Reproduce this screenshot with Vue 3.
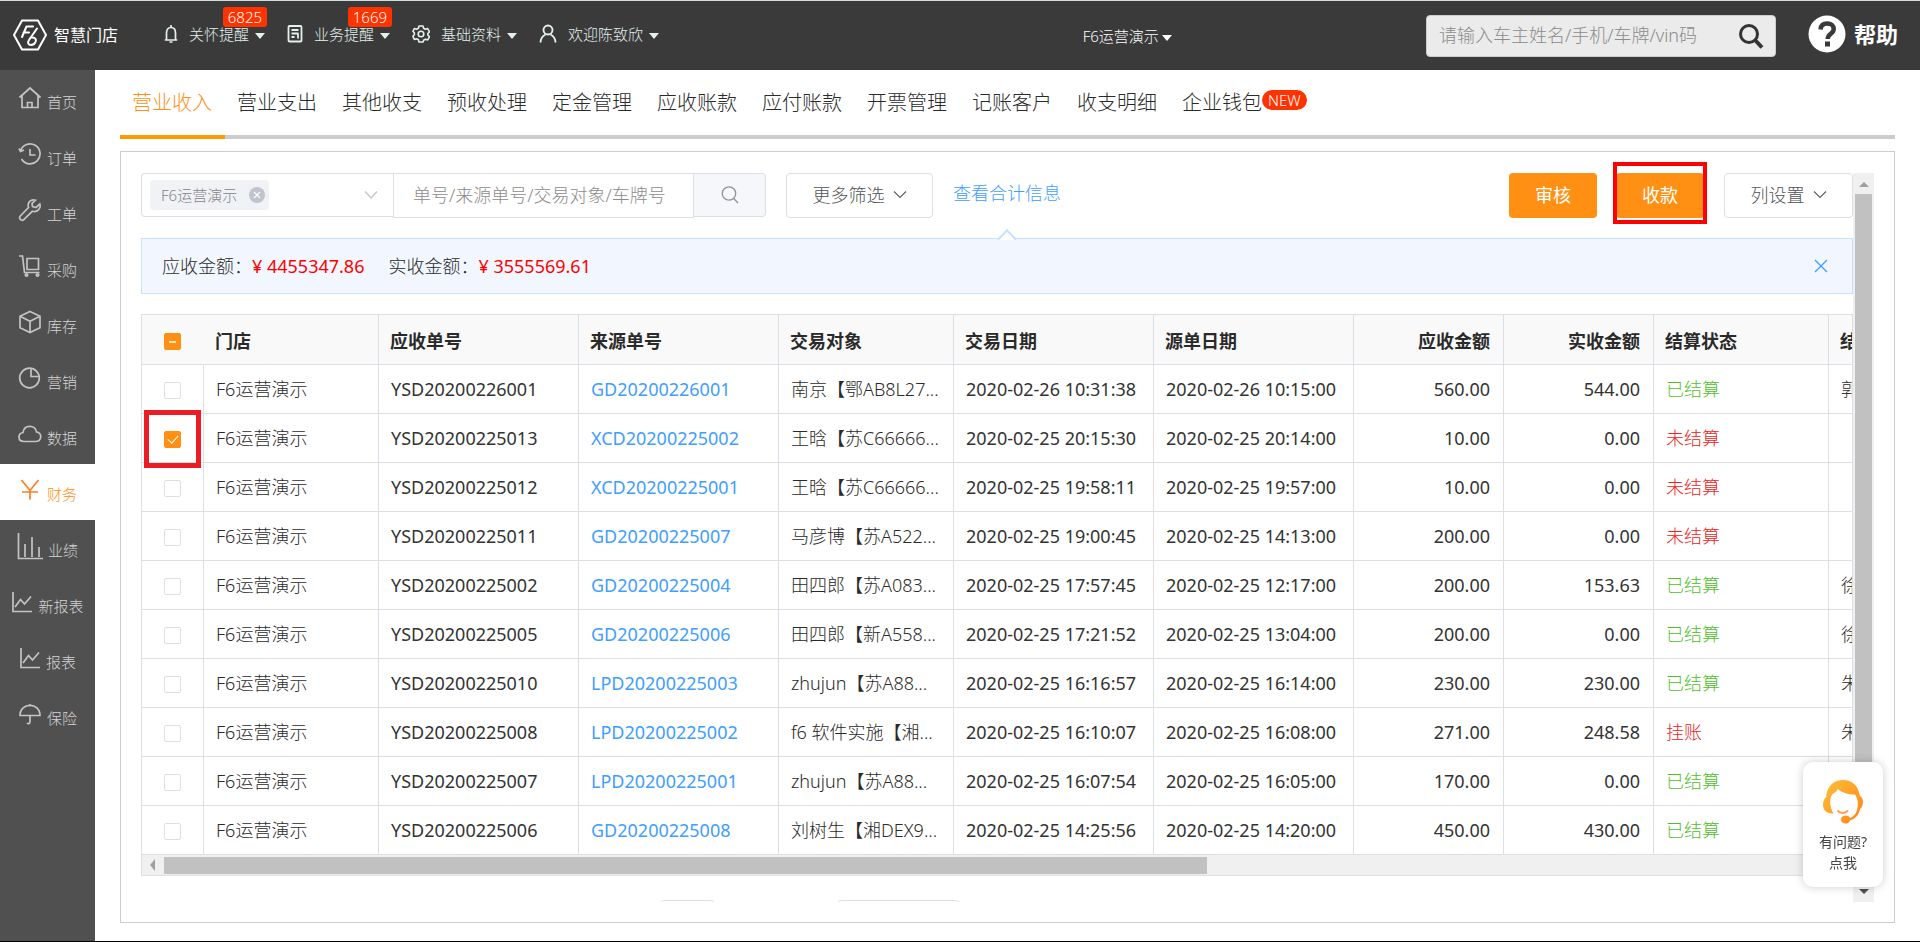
<script setup>
import { ref } from 'vue'

const menus = [
  { icon: 'bell', label: '关怀提醒', badge: '6825' },
  { icon: 'doc', label: '业务提醒', badge: '1669' },
  { icon: 'gear', label: '基础资料' },
  { icon: 'user', label: '欢迎陈致欣' },
]

const sideItems = [
  { icon: 'home', label: '首页' },
  { icon: 'history', label: '订单' },
  { icon: 'wrench', label: '工单' },
  { icon: 'cart', label: '采购' },
  { icon: 'box', label: '库存' },
  { icon: 'pie', label: '营销' },
  { icon: 'cloud', label: '数据' },
  { icon: 'yen', label: '财务', active: true },
  { icon: 'bars', label: '业绩' },
  { icon: 'line', label: '新报表' },
  { icon: 'line', label: '报表' },
  { icon: 'umbrella', label: '保险' },
]

const tabs = ['营业收入', '营业支出', '其他收支', '预收处理', '定金管理', '应收账款', '应付账款', '开票管理', '记账客户', '收支明细', '企业钱包']

const rows = ref([
  ['YSD20200226001', 'GD20200226001', '南京【鄂AB8L27...', '2020-02-26 10:31:38', '2020-02-26 10:15:00', '560.00', '544.00', '已结算', '郭'],
  ['YSD20200225013', 'XCD20200225002', '王晗【苏C66666...', '2020-02-25 20:15:30', '2020-02-25 20:14:00', '10.00', '0.00', '未结算', ''],
  ['YSD20200225012', 'XCD20200225001', '王晗【苏C66666...', '2020-02-25 19:58:11', '2020-02-25 19:57:00', '10.00', '0.00', '未结算', ''],
  ['YSD20200225011', 'GD20200225007', '马彦博【苏A522...', '2020-02-25 19:00:45', '2020-02-25 14:13:00', '200.00', '0.00', '未结算', ''],
  ['YSD20200225002', 'GD20200225004', '田四郎【苏A083...', '2020-02-25 17:57:45', '2020-02-25 12:17:00', '200.00', '153.63', '已结算', '徐'],
  ['YSD20200225005', 'GD20200225006', '田四郎【新A558...', '2020-02-25 17:21:52', '2020-02-25 13:04:00', '200.00', '0.00', '已结算', '徐'],
  ['YSD20200225010', 'LPD20200225003', 'zhujun【苏A88...', '2020-02-25 16:16:57', '2020-02-25 16:14:00', '230.00', '230.00', '已结算', '朱'],
  ['YSD20200225008', 'LPD20200225002', 'f6 软件实施【湘...', '2020-02-25 16:10:07', '2020-02-25 16:08:00', '271.00', '248.58', '挂账', '朱'],
  ['YSD20200225007', 'LPD20200225001', 'zhujun【苏A88...', '2020-02-25 16:07:54', '2020-02-25 16:05:00', '170.00', '0.00', '已结算', ''],
  ['YSD20200225006', 'GD20200225008', '刘树生【湘DEX9...', '2020-02-25 14:25:56', '2020-02-25 14:20:00', '450.00', '430.00', '已结算', ''],
].map(([no, source, party, traded, ordered, due, paid, status, settler], i) => (
  { no, source, party, traded, ordered, due, paid, status, settler, checked: i === 1 }
)))
</script>

<template>
  <div class="app">
    <header class="topbar">
      <a class="logo" href="#">
        <svg width="36" height="32" viewBox="0 0 36 32" fill="none" stroke="#fff" stroke-width="2" stroke-linejoin="round" stroke-linecap="round">
          <path d="M10 1.5h16L34 16l-8 14.500h-16L2 16z" />
          <path d="M10 18l4.500-10.500h6.500M11.500 13.500h5.500" />
          <path d="M25 9.500l-8 11.500c-2 3-.5 5 2 5 2.500 0 4-1.500 4.700-3.500.7-2.300-.7-4-3.200-4h-2" />
        </svg>
        <span>智慧门店</span>
      </a>
      <nav class="menus">
        <button v-for="m in menus" :key="m.label" class="menu" type="button">
          <svg v-if="m.icon === 'bell'" width="14" height="20" viewBox="0 0 14 20" fill="none" stroke="currentColor" stroke-width="1.700">
            <path d="M7 1v2M2.500 16V9C2.500 5.500 4 3.500 7 3.500S11.500 5.500 11.500 9v7M.8 16h12.400M5.500 18h3" />
          </svg>
          <svg v-else-if="m.icon === 'doc'" width="16" height="20" viewBox="0 0 16 20" fill="none" stroke="currentColor" stroke-width="1.800">
            <rect x="1.500" y="2" width="13" height="15.500" rx="1" /><path d="M4.500 6h7M4.500 9.500h7M4.500 13h3M11 9.500v5" />
          </svg>
          <svg v-else-if="m.icon === 'gear'" width="18" height="20" viewBox="0 0 18 20" fill="none" stroke="currentColor" stroke-width="1.600" stroke-linejoin="round">
            <path d="M7 2h4l.6 2.300 1.800 1 2.300-.7 1.800 3.200-1.700 1.700v1.500l1.700 1.700-1.800 3.200-2.300-.7-1.800 1L11 18H7l-.6-2.300-1.800-1-2.300.7L.9 12.200l1.500-1.700V9L.9 7.300 2.300 4.600l2.300.7 1.800-1z" /><circle cx="9" cy="10" r="2.800" />
          </svg>
          <svg v-else width="18" height="20" viewBox="0 0 18 20" fill="none" stroke="currentColor" stroke-width="1.900">
            <circle cx="9" cy="6" r="4.500" /><path d="M1.500 18.500c.2-4 2-6.500 5-8M16.500 18.500c-.2-4-2-6.500-5-8" />
          </svg>
          <span>{{ m.label }}</span>
          <i class="caret"></i>
          <b v-if="m.badge" class="badge">{{ m.badge }}</b>
        </button>
      </nav>
      <div class="space-left"></div>
      <button class="store" type="button"><span>F6运营演示</span><i class="caret"></i></button>
      <div class="space-right"></div>
      <form class="search" @submit.prevent>
        <input type="text" aria-label="搜索车主" placeholder="请输入车主姓名/手机/车牌/vin码">
        <button type="submit" aria-label="搜索">
          <svg width="26" height="26" viewBox="0 0 26 26" fill="none" stroke="#333" stroke-width="3"><circle cx="11" cy="11" r="8.500" /><path d="M17 17l7 7.500" stroke-width="4" /></svg>
        </button>
      </form>
      <a class="help" href="#">
        <svg width="38" height="38" viewBox="0 0 38 38"><circle cx="19" cy="19" r="18.500" fill="#fff" /><path d="M12.500 14.500c.3-4 3-6 6.700-6 4 0 6.500 2.300 6.500 5.500 0 5-6 4.500-6 10" fill="none" stroke="#3a3a3a" stroke-width="4.500" /><rect x="17" y="26.500" width="5" height="5" fill="#3a3a3a" /></svg>
        <span>帮助</span>
      </a>
    </header>

    <div class="body">
      <nav class="side">
        <a v-for="s in sideItems" :key="s.label" href="#" class="side-item" :class="{ active: s.active }">
          <svg v-if="s.icon === 'home'" width="24" height="24" viewBox="0 0 24 24"><path d="M1.500 11.500L12 2l10.500 9.500M4 9.500V21.500h16V9.500M9.500 21.500v-5h4.500v5" /></svg>
          <svg v-else-if="s.icon === 'history'" width="24" height="24" viewBox="0 0 24 24"><path d="M2.500 9A10 10 0 1 1 3.500 17M12 7v6h5.500M1 6.500l1.500 3 3.500-1.500" /></svg>
          <svg v-else-if="s.icon === 'wrench'" width="24" height="24" viewBox="0 0 24 24"><path d="M17.500 2.200C13 .8 9 4.500 10.500 9.500L2.300 18c-2 2.500 1 5.500 3.500 3.700l8.500-8.400c5 1.500 9-2.800 7.500-7.300L18 9.500l-3.500-1-.5-3z" /></svg>
          <svg v-else-if="s.icon === 'cart'" width="24" height="24" viewBox="0 0 24 24"><path d="M1 2h3.500l2 16.500h15M9 4.500h11.500v11H9zM7 18.500h14" /><circle cx="8.500" cy="21" r="1.200" /><circle cx="19.500" cy="21" r="1.200" /></svg>
          <svg v-else-if="s.icon === 'box'" width="24" height="24" viewBox="0 0 24 24"><path d="M12 1.500l10 4.700v11.600l-10 4.700-10-4.700V6.200zM2 6.200l10 5 10-5M12 11.200v11.300" /></svg>
          <svg v-else-if="s.icon === 'pie'" width="24" height="24" viewBox="0 0 24 24"><circle cx="11.500" cy="12" r="9.800" /><path d="M13 2v8.500h8.500" /></svg>
          <svg v-else-if="s.icon === 'cloud'" width="24" height="24" viewBox="0 0 24 24"><path d="M6 19.500C-.5 19.500-.5 11.500 5 10.500 6 2.500 17.500 2.500 18.500 10c6 .8 5.500 9.500-1 9.500z" /></svg>
          <svg v-else-if="s.icon === 'yen'" width="24" height="24" viewBox="0 0 24 24"><path d="M3.500 2l8.500 10.500L20.500 2M12 12.500V21.500M4 14h16" /></svg>
          <svg v-else-if="s.icon === 'bars'" width="26" height="28" viewBox="0 0 26 28"><path d="M1.500 1v25.500H26M8 25V12M15 25V5M22 25V15" /></svg>
          <svg v-else-if="s.icon === 'line'" width="22" height="24" viewBox="0 0 22 24"><path d="M2 2v19.500h19M4 17l5.500-7.500 4 4.500L20 6.500" /></svg>
          <svg v-else width="24" height="24" viewBox="0 0 24 24"><path d="M12 2v2M2 13.500C2 0 22 0 22 13.500zM12 13.500v6c0 2.500-2 2.500-3 1.500" /></svg>
          <span>{{ s.label }}</span>
        </a>
      </nav>

      <main class="main">
        <nav class="tabs">
          <a v-for="(t, i) in tabs" :key="t" href="#" class="tab" :class="{ active: i === 0 }">{{ t }}<b v-if="i === 10" class="new">NEW</b></a>
        </nav>

        <section class="panel">
          <div class="content">
            <div class="toolbar">
              <div class="filter">
                <button class="picker" type="button">
                  <span class="tag">F6运营演示
                    <svg width="16" height="16" viewBox="0 0 16 16"><circle cx="8" cy="8" r="8" fill="#c0c4cc" /><path d="M5 5l6 6M11 5l-6 6" stroke="#fff" stroke-width="1.200" /></svg>
                  </span>
                  <svg width="14" height="10" viewBox="0 0 14 10" fill="none" stroke="#c0c4cc" stroke-width="1.300"><path d="M1 1.500l6 6.500 6-6.500" /></svg>
                </button>
                <input class="keyword" type="text" aria-label="关键字" placeholder="单号/来源单号/交易对象/车牌号">
                <button class="find" type="button" aria-label="查询">
                  <svg width="18" height="20" viewBox="0 0 18 20" fill="none" stroke="#909399" stroke-width="1.300"><circle cx="8" cy="8.500" r="6.700" /><path d="M12.800 13.500L17 18" /></svg>
                </button>
              </div>
              <button class="plain more" type="button">更多筛选
                <svg width="14" height="10" viewBox="0 0 14 10" fill="none" stroke="#606266" stroke-width="1.200"><path d="M1 1.500l6 6 6-6" /></svg>
              </button>
              <a class="total-link" href="#">查看合计信息</a>
              <div class="actions">
                <button class="primary" type="button">审核</button>
                <span class="marked"><button class="primary" type="button">收款</button></span>
                <button class="plain cols" type="button">列设置
                  <svg width="14" height="10" viewBox="0 0 14 10" fill="none" stroke="#606266" stroke-width="1.200"><path d="M1 1.500l6 6 6-6" /></svg>
                </button>
              </div>
            </div>

            <div class="summary">
              <span>应收金额：</span><em>¥ 4455347.86</em>
              <span class="second">实收金额：</span><em>¥ 3555569.61</em>
              <button type="button" aria-label="关闭">
                <svg width="14" height="14" viewBox="0 0 14 14" stroke="#409eff" stroke-width="1.300"><path d="M1 1l12 12M13 1L1 13" /></svg>
              </button>
            </div>

            <div class="grid">
              <div class="grid-view">
                <table>
                  <colgroup>
                    <col class="w-check"><col class="w-m"><col class="w-l"><col class="w-l"><col class="w-m"><col class="w-l"><col class="w-l"><col class="w-s"><col class="w-s"><col class="w-m"><col class="w-s">
                  </colgroup>
                  <thead>
                    <tr>
                      <th class="check"><input type="checkbox" class="partial" aria-label="全选"></th>
                      <th>门店</th><th>应收单号</th><th>来源单号</th><th>交易对象</th><th>交易日期</th><th>源单日期</th>
                      <th class="num">应收金额</th><th class="num">实收金额</th><th>结算状态</th><th>结算人</th>
                    </tr>
                  </thead>
                  <tbody>
                    <tr v-for="(r, i) in rows" :key="r.no">
                      <td class="check"><input v-model="r.checked" type="checkbox" :aria-label="r.no"><i v-if="i === 1" class="mark"></i></td>
                      <td>F6运营演示</td>
                      <td class="code">{{ r.no }}</td>
                      <td class="code"><a href="#">{{ r.source }}</a></td>
                      <td>{{ r.party }}</td>
                      <td class="code">{{ r.traded }}</td>
                      <td class="code">{{ r.ordered }}</td>
                      <td class="code num">{{ r.due }}</td>
                      <td class="code num">{{ r.paid }}</td>
                      <td :class="r.status === '已结算' ? 'ok' : 'bad'">{{ r.status }}</td>
                      <td>{{ r.settler }}</td>
                    </tr>
                  </tbody>
                </table>
              </div>
              <div class="hbar"><i class="arrow-left"></i><div class="hthumb"></div></div>
            </div>

            <div class="pager">
              <span class="pager-size"></span>
              <span class="pager-jump"></span>
            </div>
          </div>
          <div class="vbar"><i class="arrow-up"></i><div class="vthumb"></div><i class="arrow-down"></i></div>
        </section>
      </main>
    </div>

    <button class="service" type="button">
      <svg width="42" height="46" viewBox="0 0 42 46">
        <defs><linearGradient id="hair" x1="0" y1="0" x2="1" y2="1"><stop offset="0" stop-color="#ffc038" /><stop offset="1" stop-color="#ff8416" /></linearGradient></defs>
        <path d="M4 17C6 6 12 1 21 1s15 5 17 16c4 2 4 10 0 13-1 6-5 10-10 11.500-1 4.500-9 4-9-1 0-4.500 7-5.500 9-1.500 4-1.500 6.500-5 7-8.500 2-6 .5-11-2-15-7 0-14-2-17-5.500-1 2-3.500 4-6 5.500-3 6-2 13 1.500 19-7 .5-10.500-3.500-10.500-8.500 0-4 1.500-7 4-9z" fill="url(#hair)" />
        <path d="M16 32c2.500 2.500 7 2.500 9.500 0" fill="none" stroke="#ffa060" stroke-width="2" stroke-linecap="round" />
      </svg>
      <span>有问题?</span>
      <span>点我</span>
    </button>
  </div>
</template>

<style>
body {
  margin: 0;
}
</style>

<style scoped>
.app {
  display: flex;
  flex-direction: column;
  box-sizing: border-box;
  height: 100vh;
  border-top: 1px solid #d5dae0;
  border-bottom: 1px solid #000;
  background: #fff;
  color: #2a2a2a;
  font: 300 18px/24px "Noto Sans", "Noto Sans CJK SC", sans-serif;
}
.app * {
  box-sizing: border-box;
}
svg {
  flex: none;
  display: block;
}
a {
  color: inherit;
  text-decoration: none;
}
button,
input {
  font: inherit;
  color: inherit;
  margin: 0;
}
button {
  padding: 0;
  border: 0;
  background: none;
  white-space: nowrap;
}
input::placeholder {
  color: #8c8c8c;
  opacity: 1;
}

/* top bar */
.topbar {
  flex: none;
  display: flex;
  align-items: center;
  height: 69px;
  padding: 0 22px 0 12px;
  background: #3a3a3a;
  color: #fff;
  font-size: 15px;
}
.logo {
  display: flex;
  align-items: center;
  gap: 6px;
  width: 152px;
  margin-bottom: 2px;
  font-size: 16px;
  font-weight: 400;
}
.menus {
  display: flex;
  gap: 22px;
  margin-bottom: 4px;
}
.menu {
  position: relative;
  display: flex;
  align-items: center;
  color: #e4f0ec;
  height: 28px;
}
.menu svg {
  margin-right: 11px;
}
.caret {
  width: 0;
  margin: 4px 0 0 6px;
  border: 5px solid transparent;
  border-top: 6px solid currentColor;
  border-bottom: 0;
}
.badge {
  position: absolute;
  right: -2px;
  top: -13px;
  padding: 0 5px;
  border-radius: 3px;
  background: #ff3300;
  color: #fff;
  font-weight: 300;
  line-height: 20px;
}
.space-left {
  flex: 5;
}
.space-right {
  flex: 3;
}
.store {
  display: flex;
  align-items: center;
}
.store .caret {
  margin-left: 3px;
}
.search {
  display: flex;
  align-items: center;
  width: 350px;
  height: 42px;
  margin-right: 32px;
  border: 1px solid #ccc;
  border-radius: 4px;
  background: #ebebeb;
  font-size: 18px;
}
.search input {
  flex: 1;
  min-width: 0;
  padding: 0 12px 2px;
  border: 0;
  background: none;
}
.search button {
  margin-right: 11px;
}
.help {
  display: flex;
  align-items: center;
  gap: 8px;
  margin-bottom: 4px;
  font-size: 22px;
  font-weight: 700;
}

/* side bar */
.body {
  flex: 1;
  display: flex;
  min-height: 0;
}
.side {
  flex: none;
  width: 95px;
  padding-top: 2px;
  background: #505050;
  color: #d4d4d4;
  font-size: 15px;
}
.side-item {
  display: flex;
  align-items: center;
  justify-content: center;
  gap: 5px;
  height: 56px;
}
.side-item svg {
  margin-bottom: 4px;
  fill: none;
  stroke: #c4c4c4;
  stroke-width: 1.7;
}
.side-item span {
  margin-top: 4px;
}
.side-item.active {
  background: #fff;
  color: #ff9013;
}
.side-item.active svg {
  stroke: #ff7e20;
}

/* main */
.main {
  flex: 1;
  min-width: 0;
  display: flex;
  flex-direction: column;
  padding: 0 25px 18px;
}
.tabs {
  flex: none;
  display: flex;
  height: 69px;
  box-shadow: inset 0 -4px #ccc;
  font-size: 20px;
  line-height: 66px;
}
.tab {
  display: flex;
  padding: 0 13px 0 12px;
  white-space: nowrap;
}
.tab.active {
  color: #ff9013;
  border-bottom: 4px solid #ff9900;
}
.new {
  align-self: flex-start;
  margin-top: 20px;
  padding: 0 6px;
  border-radius: 10px;
  background: #ff3300;
  color: #fff;
  font-size: 15px;
  font-weight: 300;
  line-height: 20px;
}
.panel {
  flex: 1;
  min-height: 0;
  display: flex;
  margin-top: 12px;
  padding: 0 20px 20px;
  border: 1px solid #ccc;
}
.content {
  flex: 1;
  min-width: 0;
  padding-top: 21px;
  overflow: hidden;
}
.toolbar {
  display: flex;
  height: 45px;
}
.filter {
  display: flex;
  width: 625px;
  height: 44px;
}
.picker {
  display: flex;
  align-items: center;
  justify-content: space-between;
  width: 252px;
  padding: 0 15px 0 8px;
  border: 1px solid #dcdfe6;
  border-right: 0;
  border-radius: 4px 0 0 4px;
}
.tag {
  display: flex;
  align-items: center;
  gap: 12px;
  height: 30px;
  padding: 0 4px 0 11px;
  border-radius: 4px;
  background: #f0f2f5;
  color: #808389;
  font-size: 15px;
}
.keyword {
  flex: 1;
  min-width: 0;
  height: 45px;
  padding: 0 19px 2px;
  border: 1px solid #dcdfe6;
}
.find {
  display: flex;
  align-items: center;
  justify-content: center;
  width: 72px;
  border: 1px solid #dcdfe6;
  border-left: 0;
  border-radius: 0 4px 4px 0;
  background: #f5f7fa;
}
.plain {
  display: flex;
  align-items: center;
  justify-content: center;
  gap: 8px;
  padding-bottom: 2px;
  border: 1px solid #dcdfe6;
  border-radius: 4px;
  color: #505256;
}
.more {
  width: 147px;
  margin: 0 20px;
}
.total-link {
  color: #409eff;
  line-height: 40px;
}
.actions {
  display: flex;
  margin-left: auto;
}
.primary {
  width: 88px;
  height: 45px;
  padding-bottom: 2px;
  border-radius: 4px;
  background: #ff9013;
  color: #fff;
  font-weight: 400;
}
.marked {
  position: relative;
  margin: 0 20px 0 19px;
}
.marked::after {
  content: "";
  position: absolute;
  inset: -11px -3px -6px;
  border: 4px solid #ff0000;
  pointer-events: none;
}
.cols {
  width: 129px;
}
.summary {
  position: relative;
  display: flex;
  align-items: center;
  height: 56px;
  margin-top: 20px;
  padding: 0 24px 0 20px;
  border: 1px solid #c6e2ff;
  background: #f2f7ff;
}
.summary::before {
  content: "";
  position: absolute;
  left: 858px;
  top: -7px;
  width: 12px;
  height: 12px;
  border: 2px solid #c6e2ff;
  border-right: 0;
  border-bottom: 0;
  background: linear-gradient(135deg, #fff 50%, #f2f7ff 50%);
  transform: rotate(45deg);
}
.summary em {
  color: #f00;
  font-style: normal;
  font-weight: 400;
}
.summary .second {
  margin-left: 24px;
}
.summary button {
  margin-left: auto;
}

/* table */
.grid {
  margin-top: 20px;
  border: 1px solid #dcdfe6;
}
.grid-view {
  overflow: hidden;
}
table {
  width: 1837px;
  table-layout: fixed;
  border-collapse: separate;
  border-spacing: 0;
}
.w-check {
  width: 62px;
}
.w-s {
  width: 150px;
}
.w-m {
  width: 175px;
}
.w-l {
  width: 200px;
}
th,
td {
  height: 49px;
  padding: 0 10px 0 12px;
  border-right: 1px solid #dcdfe6;
  border-bottom: 1px solid #dcdfe6;
  text-align: left;
  white-space: nowrap;
}
th {
  height: 50px;
  padding: 2px 12px 0 11px;
  background: #f9f9f9;
  font-weight: 700;
}
th.check {
  border-right-color: transparent;
}
.check {
  position: relative;
  padding: 0;
  text-align: center;
}
.code {
  color: #333;
  font-weight: 400;
}
th.num,
td.num {
  text-align: right;
  padding-right: 13px;
}
td a {
  color: #409eff;
}
.ok {
  color: #4fc01f;
}
.bad {
  color: #f02020;
}
.check input {
  position: relative;
  display: block;
  appearance: none;
  width: 17px;
  height: 17px;
  margin: 3px auto 0;
  border: 1px solid #dcdfe6;
  border-radius: 2px;
  background: #fff;
}
.check input:checked,
.check .partial {
  border-color: #ff9013;
  background: #ff9013;
}
.check input:checked::after {
  content: "";
  position: absolute;
  left: 5px;
  top: 1px;
  width: 5px;
  height: 9px;
  border: solid #fff;
  border-width: 0 1px 1px 0;
  transform: rotate(42deg);
}
.check .partial::after {
  content: "";
  position: absolute;
  left: 4px;
  top: 7px;
  width: 7px;
  height: 2px;
  background: #ffe3c2;
}
.mark {
  position: absolute;
  z-index: 1;
  inset: -4px 2px -6px;
  border: 5px solid #ec1c24;
  pointer-events: none;
}

/* scroll bars */
.hbar {
  display: flex;
  align-items: center;
  height: 20px;
  background: #f0f0f0;
}
.arrow-left {
  margin: 0 9px 0 8px;
  border: 6px solid transparent;
  border-left: 0;
  border-right: 5px solid #a0a0a0;
}
.hthumb {
  width: 61%;
  height: 17px;
  background: #c1c1c1;
}
.vbar {
  flex: none;
  display: flex;
  flex-direction: column;
  align-items: center;
  width: 21px;
  margin-top: 21px;
  background: #f0f0f0;
}
.arrow-up {
  margin: 9px 0 7px;
  border: 5px solid transparent;
  border-top: 0;
  border-bottom: 5px solid #a0a0a0;
}
.vthumb {
  flex: 1;
  width: 17px;
  margin-bottom: 18px;
  background: #c1c1c1;
}
.arrow-down {
  margin-bottom: 8px;
  border: 5px solid transparent;
  border-bottom: 0;
  border-top: 5px solid #505050;
}
.pager {
  display: flex;
  justify-content: center;
  gap: 122px;
  margin-top: 24px;
  padding-right: 374px;
}
.pager span {
  height: 36px;
  border: 1px solid #dcdfe6;
  border-radius: 4px;
}
.pager-size {
  width: 55px;
}
.pager-jump {
  width: 123px;
}

/* floating service card */
.service {
  position: fixed;
  right: 37px;
  bottom: 55px;
  display: flex;
  flex-direction: column;
  align-items: center;
  width: 80px;
  height: 125px;
  padding-top: 17px;
  border-radius: 10px;
  background: #fff;
  box-shadow: 0 0 10px rgba(0, 0, 0, 0.2);
  color: #444;
  font-size: 14px;
  font-weight: 400;
  line-height: 21px;
}
.service svg {
  margin-bottom: 6px;
}
</style>
